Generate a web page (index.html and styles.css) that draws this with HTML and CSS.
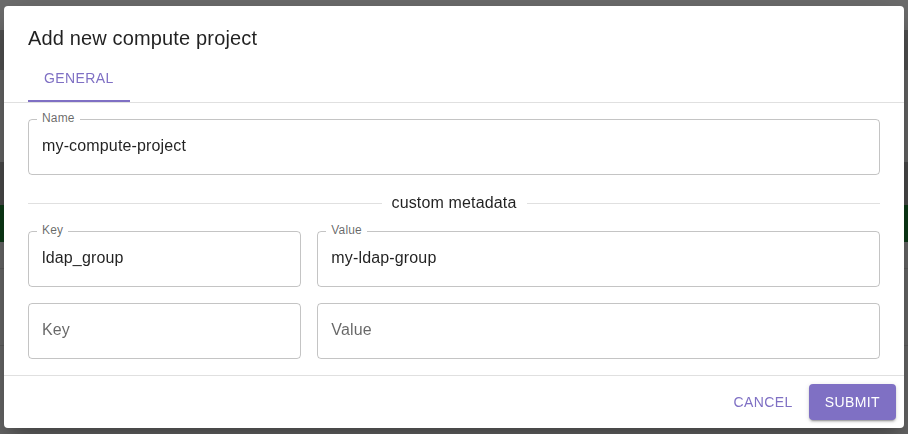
FILE: index.html
```html
<!DOCTYPE html>
<html lang="en">
<head>
    <meta charset="UTF-8">
    <meta name="viewport" content="width=device-width, initial-scale=1.0">
    <title>Add new compute project</title>
    <link rel="stylesheet" href="styles.css">
</head>
<body>
<!-- page behind the dialog, already dimmed by the backdrop -->
<div class="page">
    <div class="band band-top"></div>
    <div class="band band-bar"></div>
    <div class="band band-light"></div>
    <div class="band band-dark"></div>
    <div class="band band-green"></div>
    <div class="band band-rows">
        <div class="row-line"></div>
        <div class="row-line"></div>
    </div>
</div>

<div class="overlay">
    <div class="dialog">
        <div class="dialog-title">
            <h2>Add new compute project</h2>
            <div class="tabs">
                <button class="tab active">General</button>
            </div>
        </div>

        <div class="dialog-content">
            <div class="field">
                <label class="field-label">Name</label>
                <input class="field-input" type="text" value="my-compute-project">
            </div>

            <div class="divider"><span>custom metadata</span></div>

            <div class="meta-grid">
                <div class="field">
                    <label class="field-label">Key</label>
                    <input class="field-input" type="text" value="ldap_group">
                </div>
                <div class="field">
                    <label class="field-label">Value</label>
                    <input class="field-input" type="text" value="my-ldap-group">
                </div>
                <div class="field">
                    <input class="field-input" type="text" placeholder="Key">
                </div>
                <div class="field">
                    <input class="field-input" type="text" placeholder="Value">
                </div>
            </div>
        </div>

        <div class="dialog-actions">
            <button class="btn btn-text">Cancel</button>
            <button class="btn btn-contained">Submit</button>
        </div>
    </div>
</div>
</body>
</html>
```

FILE: styles.css
```css
* {
    box-sizing: border-box;
}

body {
    margin: 0;
    height: 100vh;
    overflow: hidden;
    background-color: #6a6a6a;
    font-family: "Liberation Sans", Arial, Helvetica, sans-serif;
    color: rgba(0, 0, 0, 0.87);
}

/* ---- dimmed page behind ---- */
.page {
    display: flex;
    flex-direction: column;
}
.band-top { height: 30px; background-color: #6e6e6e; }
.band-bar { height: 40px; background-color: #525252; }
.band-light { height: 92px; background-color: #686868; }
.band-dark { height: 43px; background-color: #4c4c4c; }
.band-green { height: 37px; background-color: #0c3c17; }
.band-rows {
    height: 192px;
    background-color: #6a6a6a;
    padding-top: 26px;
}
.row-line {
    height: 1px;
    background-color: #5e5e5e;
    margin-bottom: 76px;
}

/* ---- dialog ---- */
.overlay {
    position: fixed;
    inset: 0;
    display: flex;
    justify-content: center;
    align-items: center;
}

.dialog {
    width: 900px;
    background-color: #fff;
    border-radius: 4px;
    box-shadow: 0px 11px 15px -7px rgba(0,0,0,0.2),
                0px 24px 38px 3px rgba(0,0,0,0.14),
                0px 9px 46px 8px rgba(0,0,0,0.12);
}

.dialog-title {
    padding: 16px 24px 0;
}
.dialog-title h2 {
    margin: 0;
    font-size: 20px;
    font-weight: 400;
    line-height: 32px;
    letter-spacing: 0.15px;
}

.tabs {
    display: flex;
    height: 48px;
}
.tab {
    min-width: 90px;
    padding: 12px 16px;
    border: none;
    background: none;
    font-family: inherit;
    font-size: 14px;
    font-weight: 400;
    letter-spacing: 0.4px;
    text-transform: uppercase;
    color: rgba(0, 0, 0, 0.6);
    cursor: pointer;
}
.tab.active {
    color: #7f70c4;
    border-bottom: 2px solid #7f70c4;
    padding-bottom: 10px;
}

.dialog-content {
    border-top: 1px solid #e0e0e0;
    border-bottom: 1px solid #e0e0e0;
    padding: 16px 24px;
}

/* outlined text field */
.field {
    position: relative;
    height: 56px;
    border: 1px solid rgba(0, 0, 0, 0.23);
    border-radius: 4px;
}
.field-label {
    position: absolute;
    top: -10px;
    left: 8px;
    padding: 0 5px;
    background-color: #fff;
    font-size: 12px;
    line-height: 16px;
    letter-spacing: 0.15px;
    color: rgba(0, 0, 0, 0.6);
}
.field-input {
    width: 100%;
    height: 100%;
    border: none;
    outline: none;
    background: transparent;
    padding: 0 13px 2px;
    font-family: inherit;
    font-size: 16px;
    letter-spacing: 0.15px;
    color: rgba(0, 0, 0, 0.87);
}
.field-input::placeholder {
    color: rgba(0, 0, 0, 0.6);
    opacity: 1;
}

.divider {
    display: flex;
    align-items: center;
    margin: 16px 0;
    height: 24px;
    font-size: 16px;
    letter-spacing: 0.15px;
}
.divider::before,
.divider::after {
    content: "";
    flex: 1;
    border-top: 1px solid #e0e0e0;
}
.divider span {
    padding: 0 10px;
}

.meta-grid {
    display: grid;
    grid-template-columns: calc((100% + 16px) / 3 - 16px) 1fr;
    gap: 16px;
}

.dialog-actions {
    display: flex;
    justify-content: flex-end;
    gap: 8px;
    padding: 8px;
}

.btn {
    height: 36px;
    border: none;
    border-radius: 4px;
    font-family: inherit;
    font-size: 14px;
    font-weight: 400;
    letter-spacing: 0.4px;
    text-transform: uppercase;
    cursor: pointer;
}
.btn-text {
    padding: 6px 8px;
    background: none;
    color: #7f70c4;
}
.btn-contained {
    padding: 6px 16px;
    background-color: #7f70c4;
    color: #fff;
    box-shadow: 0px 3px 1px -2px rgba(0,0,0,0.2),
                0px 2px 2px 0px rgba(0,0,0,0.14),
                0px 1px 5px 0px rgba(0,0,0,0.12);
}
```
